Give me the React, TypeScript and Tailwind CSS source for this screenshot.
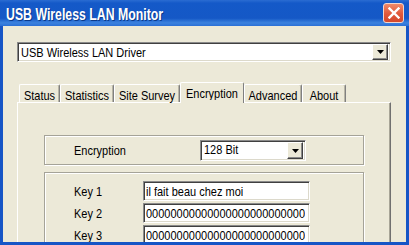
import React from "react";

const FONT = { fontFamily: '"Liberation Sans", Arial, sans-serif' };

const TABS = [
  { label: "Status", w: "w-[41px]" },
  { label: "Statistics", w: "w-[54px]" },
  { label: "Site Survey", w: "w-[66px]" },
  { label: "Encryption", w: "w-[64px]", active: true },
  { label: "Advanced", w: "w-[58px]" },
  { label: "About", w: "w-[44px]" },
];

const KEYS = [
  { label: "Key 1", value: "il fait beau chez moi" },
  { label: "Key 2", value: "00000000000000000000000000" },
  { label: "Key 3", value: "00000000000000000000000000" },
];

// the capture is a little stretched vertically, so the glyphs are too
function T({ children }: { children: React.ReactNode }) {
  return <span className="inline-block scale-y-[1.2] origin-center whitespace-nowrap">{children}</span>;
}

function DropButton() {
  return (
    <div className="w-[16px] h-full flex items-center justify-center bg-[#ece9d8] border border-t-white border-l-white border-r-[#404040] border-b-[#404040] shadow-[inset_-1px_-1px_0_#8a8a8a]">
      <svg width="7" height="4" viewBox="0 0 7 4">
        <path d="M0 0h7L3.5 4z" fill="#000" />
      </svg>
    </div>
  );
}

function Sunken({ className, children }: { className: string; children: React.ReactNode }) {
  return (
    <div
      className={`flex items-stretch bg-white border border-t-[#8a8a8a] border-l-[#8a8a8a] border-r-white border-b-white shadow-[inset_1px_1px_0_#404040,inset_-1px_-1px_0_#dcd9cb] ${className}`}
    >
      {children}
    </div>
  );
}

export default function App() {
  return (
    <div className="w-[409px] h-[245px] overflow-hidden flex flex-col bg-[#1655c6] text-black" style={FONT}>
      {/* Title bar */}
      <div className="h-[26px] shrink-0 flex items-start justify-between pl-[6px] pr-[5px] bg-[linear-gradient(to_bottom,#2a6cd2_0%,#1459c8_12%,#1558c6_70%,#3b82de_88%,#2a6fd6_100%)]">
        <span className="text-white font-bold text-[12.3px] leading-none mt-[7px] inline-block scale-y-[1.3] origin-top [text-shadow:1px_1px_0_#0a3a8a]">
          USB Wireless LAN Monitor
        </span>
        <div className="mt-[3px] w-[21px] h-[20px] rounded-[3px] border border-[#f3d6cc] bg-[linear-gradient(to_bottom,#ef8a6a,#e0583a_55%,#d4482c)] flex items-center justify-center">
          <svg width="12" height="12" viewBox="0 0 12 12">
            <path d="M1.5 1.5l9 9M10.5 1.5l-9 9" stroke="#fff" strokeWidth="2.4" strokeLinecap="square" />
          </svg>
        </div>
      </div>

      {/* Window body */}
      <div className="flex-1 mx-[3px] mb-[3px] bg-[#ece9d8] overflow-hidden pt-[16px] pl-[14px] text-[11px]">
        {/* Adapter combobox */}
        <Sunken className="w-[374px] h-[20px]">
          <span className="flex-1 leading-[16px] pl-[3px] pt-[1px]"><T>USB Wireless LAN Driver</T></span>
          <div className="p-[1px] pr-[2px] flex"><DropButton /></div>
        </Sunken>

        {/* Tabs */}
        <div className="mt-[19px] h-[21px] flex items-end pl-[2px] relative z-10">
          {TABS.map((t) =>
            t.active ? (
              <div
                key={t.label}
                className={`${t.w} h-[21px] -mb-[1px] bg-[#ece9d8] border-t border-l border-r border-t-white border-l-white border-r-[#808080] rounded-t-[2px] flex justify-center pt-[2px]`}
              >
                <T>{t.label}</T>
              </div>
            ) : (
              <div
                key={t.label}
                className={`${t.w} h-[18px] bg-[#ece9d8] border-t border-l border-r border-t-white border-l-white border-r-[#808080] shadow-[inset_-1px_0_0_#b8b5a6] rounded-t-[2px] flex justify-center pt-[2px]`}
              >
                <T>{t.label}</T>
              </div>
            )
          )}
        </div>

        {/* Tab panel */}
        <div className="w-[374px] h-[160px] border-t border-l border-r border-t-white border-l-white border-r-[#707070] shadow-[inset_-1px_0_0_#a8a597] pt-[32px] pl-[26px]">
          {/* Encryption group */}
          <div className="w-[320px] h-[30px] border border-[#a5a398] shadow-[1px_1px_0_white,inset_1px_1px_0_white] flex items-start pl-[29px]">
            <span className="w-[126px] mt-[9px] leading-none"><T>Encryption</T></span>
            <Sunken className="mt-[4px] w-[106px] h-[21px]">
              <span className="flex-1 leading-[17px] pl-[3px]"><T>128 Bit</T></span>
              <div className="p-[1px] pr-[2px] flex"><DropButton /></div>
            </Sunken>
          </div>

          {/* Keys group */}
          <div className="mt-[7px] w-[320px] h-[90px] border border-[#a5a398] shadow-[1px_1px_0_white,inset_1px_1px_0_white] pt-[8px] pl-[29px] flex flex-col gap-[2px]">
            {KEYS.map((k) => (
              <div key={k.label} className="flex items-center h-[20px]">
                <span className="w-[69px] leading-none"><T>{k.label}</T></span>
                <Sunken className="w-[167px] h-[20px]">
                  <span className="leading-[16px] pl-[2px] pt-[1px] overflow-hidden"><T>{k.value}</T></span>
                </Sunken>
              </div>
            ))}
          </div>
        </div>
      </div>
    </div>
  );
}
